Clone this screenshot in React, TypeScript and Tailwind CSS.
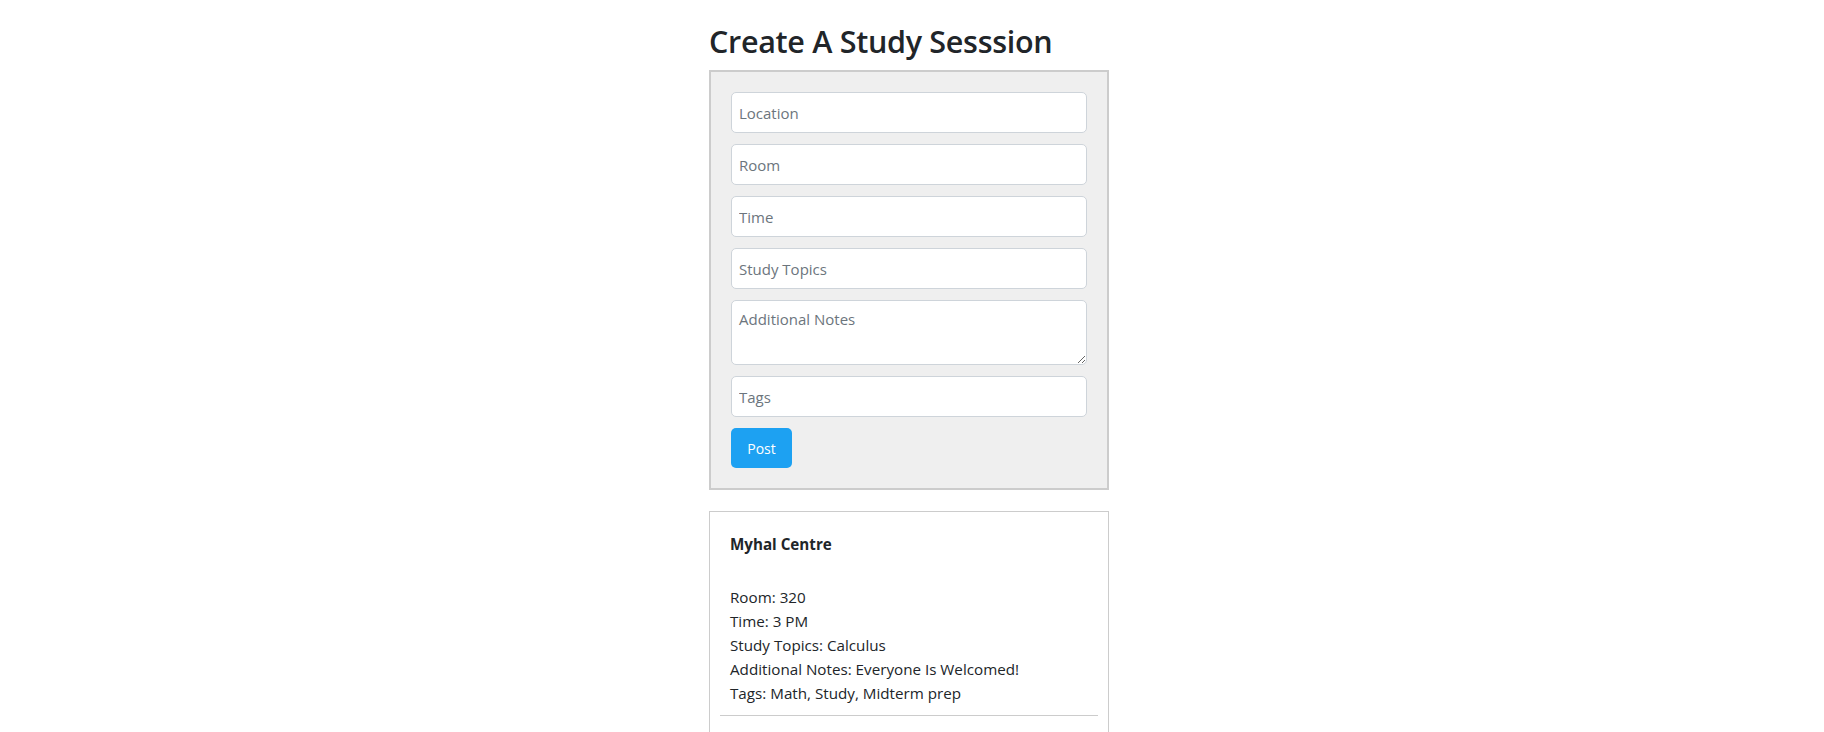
export default function App() {
    const fields = ['Location', 'Room', 'Time', 'Study Topics']

    return (
        <div className="min-h-screen bg-white font-['Open_Sans',sans-serif] text-[#212529]">
            <div className="flex justify-center pt-[22px]">
                <div className="w-[400px] mr-[6px]">
                    <h1 className="text-[30.5px] leading-[38px] font-semibold mb-[10px] tracking-[-0.3px]">
                        Create A Study Sesssion
                    </h1>

                    {/* Form */}
                    <div className="border-2 border-[#cccccc] bg-[#efefef] p-5 flex flex-col gap-[11px]">
                        {fields.map((f) => (
                            <input
                                key={f}
                                placeholder={f}
                                className="h-[41px] w-full rounded-[5px] border border-[#ced4da] bg-white px-[7px] text-[15px] placeholder:text-[#6c757d] outline-none"
                            />
                        ))}
                        <textarea
                            placeholder="Additional Notes"
                            className="h-[65px] w-full rounded-[5px] border border-[#ced4da] bg-white px-[7px] pt-[7px] text-[15px] placeholder:text-[#6c757d] outline-none block"
                        />
                        <input
                            placeholder="Tags"
                            className="h-[41px] w-full rounded-[5px] border border-[#ced4da] bg-white px-[7px] text-[15px] placeholder:text-[#6c757d] outline-none"
                        />
                        <div>
                            <button className="h-[40px] w-[61px] rounded-[5px] bg-[#1da1f2] text-[14px] text-white">
                                Post
                            </button>
                        </div>
                    </div>

                    {/* Posted sessions */}
                    <div className="mt-[21px] border border-[#cccccc] p-[10px] pb-[60px]">
                        <div className="border-b border-[#cccccc] p-[10px] text-[15.2px] leading-[24px]">
                            <h5 className="font-bold mb-[29px]">Myhal Centre</h5>
                            <p>Room: 320</p>
                            <p>Time: 3 PM</p>
                            <p>Study Topics: Calculus</p>
                            <p>Additional Notes: Everyone Is Welcomed!</p>
                            <p>Tags: Math, Study, Midterm prep</p>
                        </div>
                    </div>
                </div>
            </div>
        </div>
    )
}
